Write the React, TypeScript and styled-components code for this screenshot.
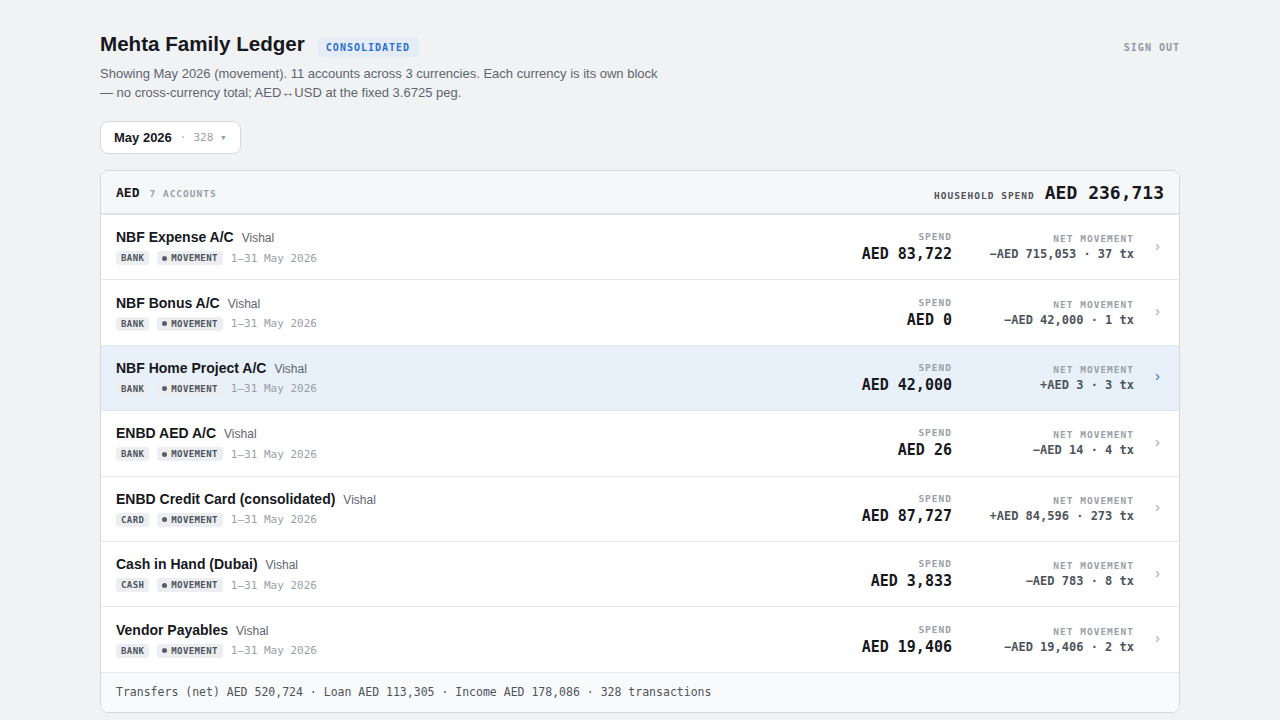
import styled, { createGlobalStyle } from "styled-components";

const mono = `"DejaVu Sans Mono", "Liberation Mono", monospace`;
const sans = `"Liberation Sans", Arial, sans-serif`;

const Global = createGlobalStyle`
  html, body {
    margin: 0;
    padding: 0;
    background: #f1f2f4;
    font-family: ${sans};
    color: #16181d;
  }
  * { box-sizing: border-box; }
`;

const Page = styled.div`
  width: 1080px;
  margin: 0 auto;
  padding: 32px 0 0;
`;

const Header = styled.div`
  display: flex;
  justify-content: space-between;
  align-items: flex-start;
`;

const TitleRow = styled.div`
  display: flex;
  align-items: baseline;
  gap: 13px;
`;

const Title = styled.h1`
  margin: 0;
  font-size: 20.6px;
  font-weight: 700;
  color: #16181d;
`;

const Badge = styled.span`
  font-family: ${mono};
  font-size: 10px;
  font-weight: 700;
  letter-spacing: 1px;
  color: #2f6fd6;
  background: #e4ecf8;
  padding: 4px 9px 4px 8px;
  border-radius: 4px;
`;

const SignOut = styled.button`
  border: none;
  background: none;
  padding: 0;
  margin-top: 10px;
  font-family: ${mono};
  font-size: 10px;
  font-weight: 700;
  letter-spacing: 1px;
  color: #9197a1;
  cursor: pointer;
`;

const Subtitle = styled.p`
  margin: 7px 0 0;
  max-width: 565px;
  font-size: 13px;
  line-height: 19px;
  color: #60656e;
`;

const Picker = styled.button`
  margin-top: 19px;
  display: inline-flex;
  align-items: center;
  gap: 8px;
  height: 33px;
  padding: 0 13px 0 13px;
  background: #fff;
  border: 1px solid #d5d8dd;
  border-radius: 8px;
  font-family: ${sans};
  font-size: 13px;
  font-weight: 700;
  color: #16181d;
`;

const PickerMeta = styled.span`
  font-family: ${mono};
  font-size: 11px;
  font-weight: 400;
  color: #9aa0a8;
  display: inline-flex;
  gap: 7px;
`;

const Card = styled.div`
  margin-top: 16px;
  background: #fff;
  border: 1px solid #d5d8dd;
  border-radius: 8px;
  overflow: hidden;
`;

const CardHead = styled.div`
  display: flex;
  align-items: center;
  justify-content: space-between;
  height: 44px;
  padding: 0 15px;
  background: #f6f7f9;
  border-bottom: 2px solid #dfe2e6;
`;

const HeadLeft = styled.div`
  display: flex;
  align-items: baseline;
  gap: 10px;
`;

const Currency = styled.span`
  font-family: ${mono};
  font-size: 13px;
  font-weight: 700;
  color: #16181d;
`;

const SmallCaps = styled.span<{ $dark?: boolean }>`
  font-family: ${mono};
  font-size: 9.5px;
  font-weight: 700;
  letter-spacing: 1px;
  color: ${({ $dark }) => ($dark ? "#4f545c" : "#9aa0a8")};
`;

const HeadRight = styled.div`
  display: flex;
  align-items: baseline;
  gap: 10px;
`;

const BigTotal = styled.span`
  font-family: ${mono};
  font-size: 18px;
  font-weight: 700;
  color: #16181d;
`;

const Row = styled.div<{ $active?: boolean }>`
  display: flex;
  align-items: center;
  height: 65.4px;
  padding: 0 19px 0 15px;
  border-bottom: 1px solid #e5e7ea;
  background: ${({ $active }) => ($active ? "#e8f0fa" : "#fff")};
`;

const Info = styled.div`
  flex: 1;
  display: flex;
  flex-direction: column;
  gap: 6px;
`;

const NameLine = styled.div`
  display: flex;
  align-items: baseline;
  gap: 8px;
`;

const Name = styled.span`
  font-size: 14px;
  font-weight: 700;
  color: #16181d;
`;

const Owner = styled.span`
  font-size: 12px;
  color: #5f646c;
`;

const Tags = styled.div`
  display: flex;
  align-items: center;
  gap: 8px;
`;

const Tag = styled.span`
  display: inline-flex;
  align-items: center;
  gap: 4px;
  font-family: ${mono};
  font-size: 9px;
  font-weight: 700;
  letter-spacing: 0.4px;
  color: #4f545c;
  background: #eceef1;
  padding: 2px 5px;
  border-radius: 3px;
`;

const Dot = styled.span`
  width: 5px;
  height: 5px;
  border-radius: 50%;
  background: #5a5f67;
`;

const Period = styled.span`
  font-family: ${mono};
  font-size: 11px;
  color: #9aa0a8;
`;

const Stat = styled.div<{ $w: number }>`
  width: ${({ $w }) => $w}px;
  display: flex;
  flex-direction: column;
  align-items: flex-end;
  gap: 3px;
`;

const SpendValue = styled.span`
  font-family: ${mono};
  font-size: 15px;
  font-weight: 700;
  color: #16181d;
`;

const NetValue = styled.span`
  font-family: ${mono};
  font-size: 12px;
  font-weight: 700;
  color: #4f545c;
`;

const Chevron = styled.span<{ $active?: boolean }>`
  width: 26px;
  text-align: right;
  font-size: 15px;
  color: ${({ $active }) => ($active ? "#2f6fd6" : "#a3a8b0")};
  margin-top: -4px;
`;

const Footer = styled.div`
  height: 39px;
  display: flex;
  align-items: center;
  padding: 0 15px;
  background: #f9fafb;
  font-family: ${mono};
  font-size: 11.5px;
  color: #4f545c;
`;

type Account = {
  name: string;
  kind: string;
  spend: string;
  net: string;
  active?: boolean;
};

const accounts: Account[] = [
  { name: "NBF Expense A/C", kind: "BANK", spend: "AED 83,722", net: "−AED 715,053 · 37 tx" },
  { name: "NBF Bonus A/C", kind: "BANK", spend: "AED 0", net: "−AED 42,000 · 1 tx" },
  { name: "NBF Home Project A/C", kind: "BANK", spend: "AED 42,000", net: "+AED 3 · 3 tx", active: true },
  { name: "ENBD AED A/C", kind: "BANK", spend: "AED 26", net: "−AED 14 · 4 tx" },
  { name: "ENBD Credit Card (consolidated)", kind: "CARD", spend: "AED 87,727", net: "+AED 84,596 · 273 tx" },
  { name: "Cash in Hand (Dubai)", kind: "CASH", spend: "AED 3,833", net: "−AED 783 · 8 tx" },
  { name: "Vendor Payables", kind: "BANK", spend: "AED 19,406", net: "−AED 19,406 · 2 tx" },
];

export default function App() {
  return (
    <>
      <Global />
      <Page>
        <Header>
          <div>
            <TitleRow>
              <Title>Mehta Family Ledger</Title>
              <Badge>CONSOLIDATED</Badge>
            </TitleRow>
            <Subtitle>
              Showing May 2026 (movement). 11 accounts across 3 currencies. Each currency is its own block
              — no cross-currency total; AED↔USD at the fixed 3.6725 peg.
            </Subtitle>
          </div>
          <SignOut>SIGN OUT</SignOut>
        </Header>

        <Picker>
          May 2026
          <PickerMeta>
            <span>·</span>
            <span>328 ▾</span>
          </PickerMeta>
        </Picker>

        <Card>
          <CardHead>
            <HeadLeft>
              <Currency>AED</Currency>
              <SmallCaps>7 ACCOUNTS</SmallCaps>
            </HeadLeft>
            <HeadRight>
              <SmallCaps $dark>HOUSEHOLD SPEND</SmallCaps>
              <BigTotal>AED 236,713</BigTotal>
            </HeadRight>
          </CardHead>

          {accounts.map((a) => (
            <Row key={a.name} $active={a.active}>
              <Info>
                <NameLine>
                  <Name>{a.name}</Name>
                  <Owner>Vishal</Owner>
                </NameLine>
                <Tags>
                  <Tag>{a.kind}</Tag>
                  <Tag>
                    <Dot />
                    MOVEMENT
                  </Tag>
                  <Period>1–31 May 2026</Period>
                </Tags>
              </Info>
              <Stat $w={140}>
                <SmallCaps>SPEND</SmallCaps>
                <SpendValue>{a.spend}</SpendValue>
              </Stat>
              <Stat $w={182}>
                <SmallCaps>NET MOVEMENT</SmallCaps>
                <NetValue>{a.net}</NetValue>
              </Stat>
              <Chevron $active={a.active}>›</Chevron>
            </Row>
          ))}

          <Footer>
            Transfers (net) AED 520,724 · Loan AED 113,305 · Income AED 178,086 · 328 transactions
          </Footer>
        </Card>
      </Page>
    </>
  );
}
